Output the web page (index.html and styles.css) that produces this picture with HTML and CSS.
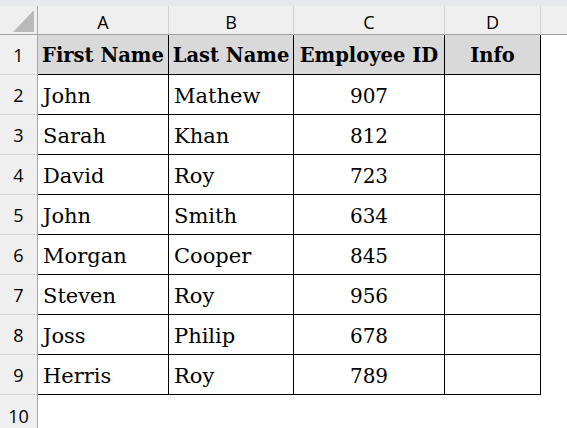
FILE: index.html
```html
<!DOCTYPE html>
<html>
<head>
<meta charset="utf-8">
<link rel="stylesheet" href="styles.css">
</head>
<body>
<div class="topbar"></div>
<div class="sheet">
  <div class="corner"><svg width="37" height="28" viewBox="0 0 37 28"><polygon points="13,26 34,26 34,4" fill="#b9b9b9"/></svg></div>
  <div class="colhead">A</div>
  <div class="colhead">B</div>
  <div class="colhead">C</div>
  <div class="colhead">D</div>
  <div class="colhead colhead-e"></div>

  <div class="rowhead">1</div>
  <div class="cell head">First Name</div>
  <div class="cell head">Last Name</div>
  <div class="cell head">Employee ID</div>
  <div class="cell head">Info</div>
  <div class="blank"></div>

  <div class="rowhead">2</div>
  <div class="cell">John</div>
  <div class="cell">Mathew</div>
  <div class="cell num">907</div>
  <div class="cell"></div>
  <div class="blank"></div>

  <div class="rowhead">3</div>
  <div class="cell">Sarah</div>
  <div class="cell">Khan</div>
  <div class="cell num">812</div>
  <div class="cell"></div>
  <div class="blank"></div>

  <div class="rowhead">4</div>
  <div class="cell">David</div>
  <div class="cell">Roy</div>
  <div class="cell num">723</div>
  <div class="cell"></div>
  <div class="blank"></div>

  <div class="rowhead">5</div>
  <div class="cell">John</div>
  <div class="cell">Smith</div>
  <div class="cell num">634</div>
  <div class="cell"></div>
  <div class="blank"></div>

  <div class="rowhead">6</div>
  <div class="cell">Morgan</div>
  <div class="cell">Cooper</div>
  <div class="cell num">845</div>
  <div class="cell"></div>
  <div class="blank"></div>

  <div class="rowhead">7</div>
  <div class="cell">Steven</div>
  <div class="cell">Roy</div>
  <div class="cell num">956</div>
  <div class="cell"></div>
  <div class="blank"></div>

  <div class="rowhead">8</div>
  <div class="cell">Joss</div>
  <div class="cell">Philip</div>
  <div class="cell num">678</div>
  <div class="cell"></div>
  <div class="blank"></div>

  <div class="rowhead">9</div>
  <div class="cell">Herris</div>
  <div class="cell">Roy</div>
  <div class="cell num">789</div>
  <div class="cell"></div>
  <div class="blank"></div>

  <div class="rowhead rowhead-last">10</div>
  <div class="blank"></div>
  <div class="blank"></div>
  <div class="blank"></div>
  <div class="blank"></div>
  <div class="blank"></div>
</div>
</body>
</html>
```
FILE: styles.css
```css
html, body {
  margin: 0;
  padding: 0;
  background: #ffffff;
  overflow: hidden;
}
.topbar {
  height: 6px;
  background: #e6e8eb;
}
.sheet {
  display: grid;
  grid-template-columns: 38px 131px 125px 151px 96px 1fr;
  grid-template-rows: 29px repeat(9, 40px) 40px;
  font-family: "DejaVu Serif", "Liberation Serif", serif;
  font-size: 21px;
  color: #000;
}
.corner {
  background: #efefef;
  border-right: 1px solid #a8a8a8;
  border-bottom: 1px solid #a0a0a0;
  box-sizing: border-box;
  display: flex;
  align-items: flex-end;
  justify-content: flex-start;
}
.corner svg { display: block; }
.colhead {
  background: #efefef;
  border-right: 1px solid #d2d2d2;
  border-bottom: 1px solid #a0a0a0;
  box-sizing: border-box;
  font-family: "Open Sans", "Noto Sans", sans-serif;
  font-size: 18px;
  display: flex;
  align-items: center;
  justify-content: center;
  padding-top: 4px;
}
.colhead-e { border-right: none; }
.rowhead {
  background: #efefef;
  border-right: 1px solid #a8a8a8;
  border-bottom: 1px solid #d5d5d5;
  box-sizing: border-box;
  font-family: "Open Sans", "Noto Sans", sans-serif;
  font-size: 18px;
  display: flex;
  align-items: center;
  justify-content: center;
  padding-top: 1px;
}
.rowhead-last { border-bottom: none; }
.cell {
  border-right: 1px solid #000;
  border-bottom: 1px solid #000;
  box-sizing: border-box;
  display: flex;
  align-items: center;
  padding: 2px 0 0 5px;
  white-space: nowrap;
  overflow: hidden;
}
.head {
  background: #d9d9d9;
  font-weight: bold;
  font-size: 19.5px;
  justify-content: center;
  padding-left: 0;
}
.num {
  font-size: 20px;
  justify-content: center;
  padding-left: 0;
}
.blank {
  background: #fff;
}
```
